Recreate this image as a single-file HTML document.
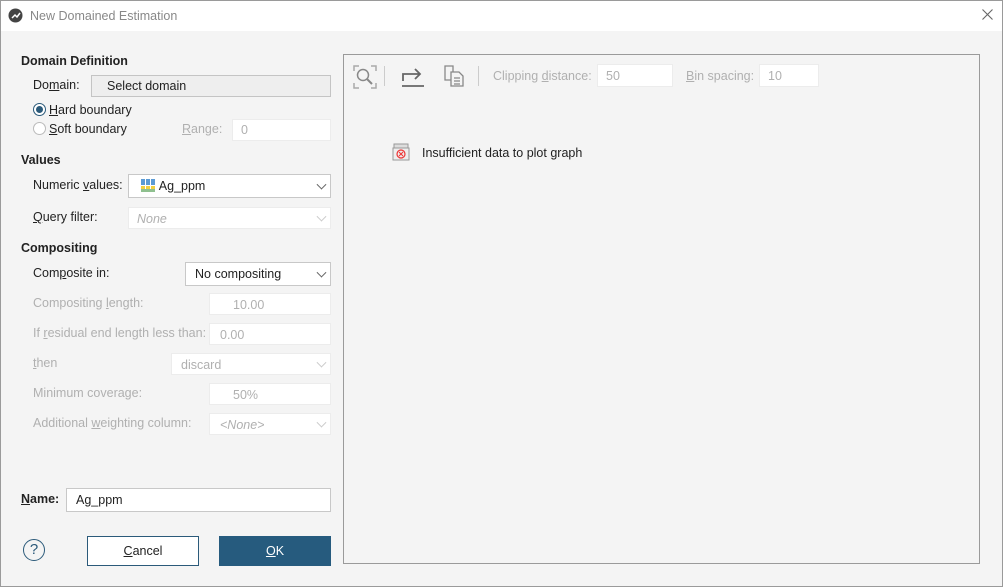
<!DOCTYPE html>
<html><head><style>
*{box-sizing:border-box;margin:0;padding:0}
body{width:1003px;height:587px;overflow:hidden;font-family:"Liberation Sans",sans-serif;font-size:12.5px;color:#222;background:#f4f4f4}
.win{position:absolute;left:0;top:0;width:1003px;height:587px;background:#f4f4f4}
.frame{position:absolute;left:0;top:0;width:1003px;height:587px;border:1px solid #9a9a9a;pointer-events:none}
.title{position:absolute;left:0;top:0;width:1003px;height:31px;background:#fff}
.a{position:absolute;white-space:nowrap}
.h{font-weight:bold}
.box{position:absolute;background:#fff;border:1px solid #c8c8c8}
.dis{color:#b0b0b0}
.dbox{position:absolute;background:#fff;border:1px solid #ececec}
.chev{position:absolute;right:5px;top:50%;width:7px;height:7px;border-right:1px solid #666;border-bottom:1px solid #666;transform:translateY(-70%) rotate(45deg)}
.dbox .chev{border-color:#ccc}
u{text-decoration:underline}
</style></head><body>
<div class="win">
<div class="title">
<svg class="a" style="left:8px;top:8px" width="15" height="15" viewBox="0 0 15 15"><circle cx="7.5" cy="7.5" r="7" fill="#444"/><path d="M4 10l3-3 2 2 3-4" stroke="#fff" stroke-width="1.5" fill="none"/></svg>
<div class="a" style="left:30px;top:9px;color:#888;font-size:12.5px">New Domained Estimation</div>
<svg class="a" style="left:982px;top:9px" width="11" height="11" viewBox="0 0 11 11" stroke="#666" stroke-width="1.1"><path d="M0.5 0.5l10 10M10.5 0.5l-10 10"/></svg>
</div>

<div class="a h" style="left:21px;top:54px">Domain Definition</div>
<div class="a" style="left:33px;top:78px">Do<u>m</u>ain:</div>
<div class="a" style="left:91px;top:75px;width:240px;height:22px;background:#eee;border:1px solid #c4c4c4;padding:3px 0 0 15px">Select domain</div>
<div class="a" style="left:33px;top:103px;width:13px;height:13px;border-radius:50%;border:1px solid #2b5a7a;background:#fff"><div style="margin:2px;width:7px;height:7px;border-radius:50%;background:#2b5a7a"></div></div>
<div class="a" style="left:49px;top:103px"><u>H</u>ard boundary</div>
<div class="a" style="left:33px;top:122px;width:13px;height:13px;border-radius:50%;border:1px solid #bbb;background:#fff"></div>
<div class="a" style="left:49px;top:122px"><u>S</u>oft boundary</div>
<div class="a dis" style="left:182px;top:122px"><u>R</u>ange:</div>
<div class="dbox" style="left:232px;top:119px;width:99px;height:22px;padding:3px 8px" ><span class="dis">0</span></div>

<div class="a h" style="left:21px;top:153px">Values</div>
<div class="a" style="left:33px;top:178px">Numeric <u>v</u>alues:</div>
<div class="box" style="left:128px;top:174px;width:203px;height:24px;padding:4px 0 0 12px">
<svg style="vertical-align:-2px" width="15" height="13"><rect x="0" y="0" width="4" height="6" fill="#5b9bd5"/><rect x="5" y="0" width="4" height="6" fill="#5b9bd5"/><rect x="10" y="0" width="4" height="6" fill="#5b9bd5"/><rect x="0" y="7" width="4" height="3" fill="#f0d040"/><rect x="5" y="7" width="4" height="3" fill="#f0d040"/><rect x="10" y="7" width="4" height="3" fill="#f0d040"/><rect x="0" y="10" width="14" height="3" fill="#8fc08f"/></svg> Ag_ppm<div class="chev"></div></div>
<div class="a" style="left:33px;top:210px"><u>Q</u>uery filter:</div>
<div class="dbox" style="left:128px;top:207px;width:203px;height:22px;padding:4px 8px"><i class="dis">None</i><div class="chev"></div></div>

<div class="a h" style="left:21px;top:241px">Compositing</div>
<div class="a" style="left:33px;top:266px">Com<u>p</u>osite in:</div>
<div class="box" style="left:185px;top:262px;width:146px;height:24px;padding:4px 0 0 9px">No compositing<div class="chev"></div></div>
<div class="a dis" style="left:33px;top:296px">Compositing <u>l</u>ength:</div>
<div class="dbox" style="left:209px;top:293px;width:122px;height:22px;padding:4px 0 0 23px"><span class="dis">10.00</span></div>
<div class="a dis" style="left:33px;top:326px">If <u>r</u>esidual end length less than:</div>
<div class="dbox" style="left:209px;top:323px;width:122px;height:22px;padding:4px 0 0 10px"><span class="dis">0.00</span></div>
<div class="a dis" style="left:33px;top:356px"><u>t</u>hen</div>
<div class="dbox" style="left:171px;top:353px;width:160px;height:22px;padding:4px 0 0 9px"><span class="dis">discard</span><div class="chev"></div></div>
<div class="a dis" style="left:33px;top:386px">Minimum coverage:</div>
<div class="dbox" style="left:209px;top:383px;width:122px;height:22px;padding:4px 0 0 23px"><span class="dis">50%</span></div>
<div class="a dis" style="left:33px;top:416px">Additional <u>w</u>eighting column:</div>
<div class="dbox" style="left:209px;top:413px;width:122px;height:22px;padding:4px 0 0 10px"><i class="dis">&lt;None&gt;</i><div class="chev"></div></div>

<div class="a h" style="left:21px;top:492px"><u>N</u>ame:</div>
<div class="box" style="left:66px;top:488px;width:265px;height:24px;padding:4px 0 0 9px">Ag_ppm</div>
<div class="a" style="left:23px;top:539px;width:22px;height:22px;border-radius:50%;border:1.5px solid #2b5a7a;color:#2b5a7a;text-align:center;font-size:15px;line-height:19px">?</div>
<div class="a" style="left:87px;top:536px;width:112px;height:30px;border:1px solid #2b5a7a;background:#fff;text-align:center;line-height:28px"><u>C</u>ancel</div>
<div class="a" style="left:219px;top:536px;width:112px;height:30px;background:#265b7e;color:#fff;text-align:center;line-height:30px"><u>O</u>K</div>

<div class="a" style="left:343px;top:54px;width:637px;height:510px;border:1px solid #9a9a9a;background:#f4f4f4">
<svg class="a" style="left:9px;top:10px" width="24" height="24" viewBox="0 0 24 24" fill="none" stroke="#aaa" stroke-width="1.5"><path d="M1 6V1h5M18 1h5v5M1 18v5h5M18 23h5v-5"/><circle cx="10" cy="10" r="5.5" stroke="#888"/><path d="M14 14l5 5" stroke="#888" stroke-width="2"/></svg>
<div class="a" style="left:40px;top:11px;width:1px;height:20px;background:#ccc"></div>
<svg class="a" style="left:56px;top:9px" width="28" height="24" viewBox="0 0 28 24" fill="none" stroke="#666" stroke-width="1.8"><path d="M3 17V10h16M15 5l5 5-5 5"/><path d="M2 22h22"/></svg>
<svg class="a" style="left:99px;top:9px" width="22" height="24" viewBox="0 0 22 24" fill="none" stroke="#888" stroke-width="1.3"><path d="M2 2h8v14H2z"/><path d="M8 8h8l4 4v10H8z" fill="#f4f4f4"/><path d="M11 14h6M11 17h6M11 20h6"/></svg>
<div class="a" style="left:134px;top:11px;width:1px;height:20px;background:#ccc"></div>
<div class="a dis" style="left:149px;top:14px">Clipping <u>d</u>istance:</div>
<div class="dbox" style="left:253px;top:9px;width:76px;height:23px;padding:4px 8px"><span class="dis">50</span></div>
<div class="a dis" style="left:342px;top:14px"><u>B</u>in spacing:</div>
<div class="dbox" style="left:415px;top:9px;width:60px;height:23px;padding:4px 8px"><span class="dis">10</span></div>
<svg class="a" style="left:48px;top:88px" width="18" height="18" viewBox="0 0 18 18"><rect x="2" y="1" width="14" height="4" fill="#ddd" stroke="#999"/><rect x="1" y="5" width="16" height="12" fill="#eee" stroke="#999"/><circle cx="9" cy="11" r="4" fill="none" stroke="#e33" stroke-width="1.2"/><path d="M7 9l4 4M11 9l-4 4" stroke="#e33"/></svg>
<div class="a" style="left:78px;top:91px">Insufficient data to plot graph</div>
</div>
</div>
<div class="frame"></div>
</body></html>
